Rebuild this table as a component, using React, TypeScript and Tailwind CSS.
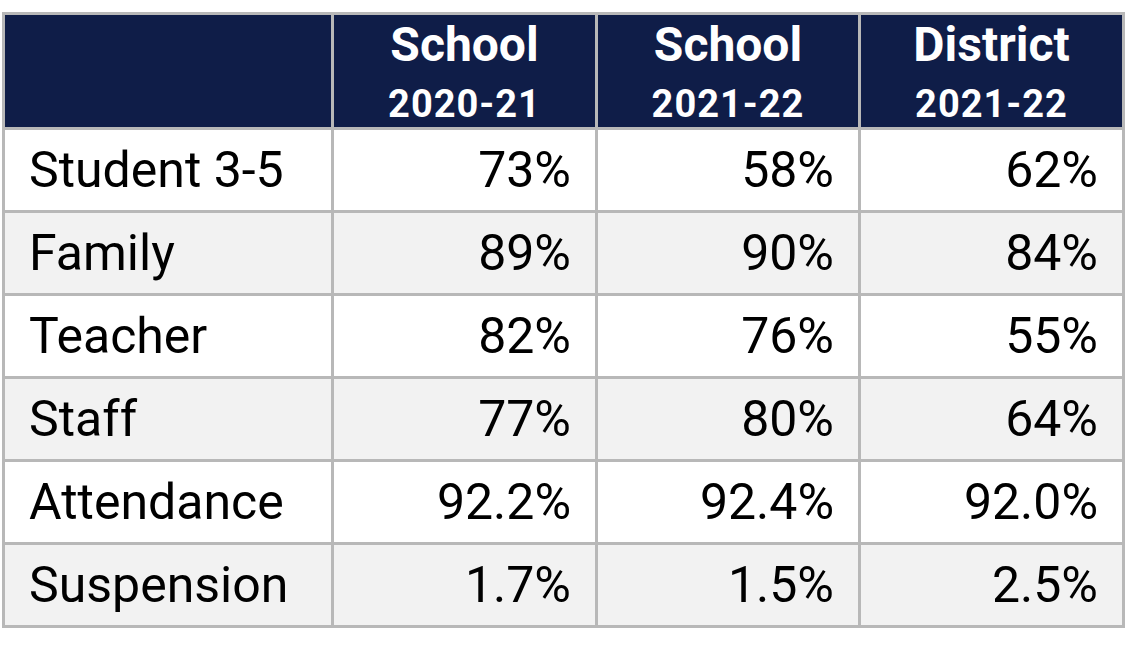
const columns = [
  { title: "School", year: "2020-21" },
  { title: "School", year: "2021-22" },
  { title: "District", year: "2021-22" },
];

const rows = [
  { label: "Student 3-5", values: ["73%", "58%", "62%"] },
  { label: "Family", values: ["89%", "90%", "84%"] },
  { label: "Teacher", values: ["82%", "76%", "55%"] },
  { label: "Staff", values: ["77%", "80%", "64%"] },
  { label: "Attendance", values: ["92.2%", "92.4%", "92.0%"] },
  { label: "Suspension", values: ["1.7%", "1.5%", "2.5%"] },
];

const App = () => {
  return (
    <div className="w-[1130px] h-[645px] bg-white pt-[12px] pl-[2px] font-['Roboto',sans-serif]">
      <div className="inline-grid grid-cols-[326px_261px_260px_261px] grid-rows-[112px_repeat(6,80px)] gap-[3px] p-[3px] bg-[#b8b8b8]">
        {/* Header */}
        <div className="bg-[#0f1d48]" />
        {columns.map((col, i) => (
          <div
            key={i}
            className="bg-[#0f1d48] flex flex-col items-center text-white font-bold"
          >
            <span className="text-[48px] leading-none mt-[6px]">{col.title}</span>
            <span className="text-[38px] leading-none tracking-[1px] mt-[16px]">{col.year}</span>
          </div>
        ))}

        {/* Rows */}
        {rows.map((row, r) => {
          const bg = r % 2 === 0 ? "bg-white" : "bg-[#f2f2f2]";
          return [
            <div
              key={`${r}-label`}
              className={`${bg} flex items-center pl-[24px] text-[50px] text-black leading-none`}
            >
              {row.label}
            </div>,
            ...row.values.map((v, c) => (
              <div
                key={`${r}-${c}`}
                className={`${bg} flex items-center justify-end pr-[24px] text-[50px] text-black leading-none`}
              >
                {v}
              </div>
            )),
          ];
        })}
      </div>
    </div>
  );
};

export default App;
